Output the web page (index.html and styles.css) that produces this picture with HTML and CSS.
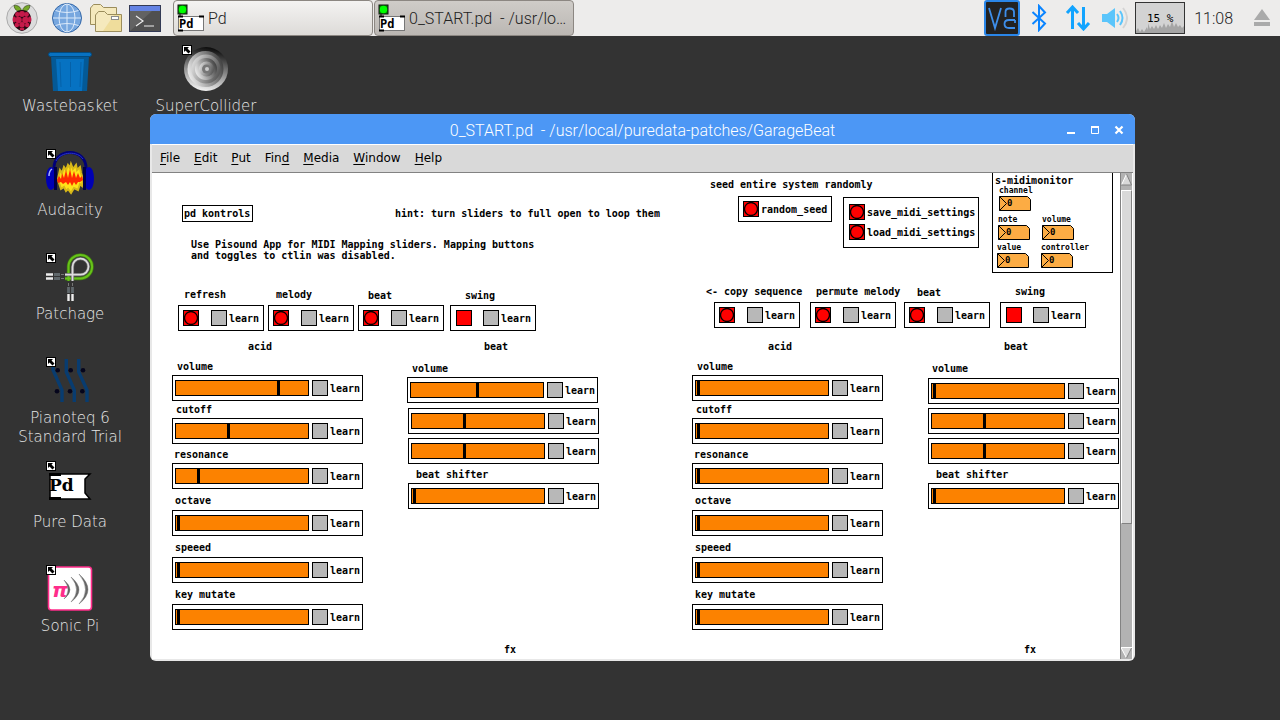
FILE: index.html
```html
<!DOCTYPE html>
<html lang="en">
<head>
  <meta charset="UTF-8">
  <meta name="viewport" content="width=device-width, initial-scale=1.0">
  <title>0_START.pd</title>
  <link rel="stylesheet" href="styles.css">
</head>
<body>
  <header class="taskbar">
    <nav class="launchers">
      <button class="launcher" aria-label="Menu">
        <svg width="32" height="32" viewBox="0 0 32 32">
          <circle cx="16" cy="16" r="15.3" fill="#dcdcdc" stroke="#aaa"/>
          <path d="M15.500 9C11 10 8.500 7.500 8 3.500C12 3 15 5 15.500 9ZM16.500 9C21 10 23.500 7.500 24 3.500C20 3 17 5 16.500 9Z" fill="#75a928" stroke="#2d3d12" stroke-width=".6"/>
          <path d="M16 8C10 8 7 12 7 17C6 23 11 28 16 29C21 28 26 23 25 17C25 12 22 8 16 8Z" fill="#240610"/>
          <g fill="#c51a4a">
            <circle cx="16" cy="12" r="3"/><circle cx="11.500" cy="12.500" r="2.400"/><circle cx="20.500" cy="12.500" r="2.400"/>
            <circle cx="12.500" cy="18" r="3.300"/><circle cx="19.500" cy="18" r="3.300"/>
            <ellipse cx="8.300" cy="17.500" rx="1.700" ry="3"/><ellipse cx="23.700" cy="17.500" rx="1.700" ry="3"/>
            <circle cx="16" cy="22.800" r="2.800"/><circle cx="10.800" cy="23" r="2.300"/><circle cx="21.200" cy="23" r="2.300"/>
            <ellipse cx="16" cy="27" rx="2.500" ry="1.300"/>
          </g>
        </svg>
      </button>
      <button class="launcher" aria-label="Web Browser">
        <svg width="32" height="32" viewBox="0 0 32 32">
          <circle cx="16" cy="16" r="14.500" fill="#77a7df" stroke="#3568a8"/>
          <g fill="none" stroke="#dceafa">
            <path d="M16 2V30M2 16H30M4.500 8.500Q16 12.500 27.500 8.500M4.500 23.500Q16 19.500 27.500 23.500"/>
            <ellipse cx="16" cy="16" rx="8" ry="14"/>
          </g>
        </svg>
      </button>
      <button class="launcher" aria-label="File Manager">
        <svg width="34" height="32" viewBox="0 0 34 32">
          <g stroke="#9b8d5c" fill="#f5e9bd">
            <path d="M1.500 22.500V6L4.500 2.500H11.500L14.500 5.500H27.500V22.500Z"/>
            <path d="M6.500 29.500V13L9.500 9.500H15.500L18.500 12.500H32.500V29.500Z"/>
          </g>
          <path d="M14 29L25 13H32V29Z" fill="#efdd9c"/>
          <rect x="22.500" y="14.500" width="7" height="3" fill="#fff" stroke="#8c8c8c"/>
        </svg>
      </button>
      <button class="launcher" aria-label="Terminal">
        <svg width="34" height="32" viewBox="0 0 34 32">
          <rect x="1.500" y="3.500" width="31" height="26" fill="#505050" stroke="#333a55"/>
          <path d="M2 29V9H24Z" fill="#626262"/>
          <rect x="2" y="4" width="30" height="5" fill="#6483e4"/>
          <path d="M8 14L15 19L8 24M16 24H26" fill="none" stroke="#eee" stroke-width="1.200"/>
        </svg>
      </button>
    </nav>

    <div class="tasks">
      <button class="task">
        <svg width="28" height="30" viewBox="0 0 28 30">
          <rect x="1" y="2" width="9" height="9" fill="#008a00" stroke="#111"/>
          <circle cx="5.500" cy="6.500" r="3.700" fill="#0f0"/>
          <path d="M3 11V14" stroke="#111"/>
          <rect x="1.500" y="13.500" width="25" height="14" fill="#fff" stroke="#777"/>
          <path d="M1 13.500H6M22 13.500H27M1 27.500H6" stroke="#000" stroke-width="2"/>
          <text x="2" y="25" class="pd-text">Pd</text>
        </svg>
        <span>Pd</span>
      </button>
      <button class="task active">
        <svg width="28" height="30" viewBox="0 0 28 30">
          <rect x="1" y="2" width="9" height="9" fill="#008a00" stroke="#111"/>
          <circle cx="5.500" cy="6.500" r="3.700" fill="#0f0"/>
          <path d="M3 11V14" stroke="#111"/>
          <rect x="1.500" y="13.500" width="25" height="14" fill="#fff" stroke="#777"/>
          <path d="M1 13.500H6M22 13.500H27M1 27.500H6" stroke="#000" stroke-width="2"/>
          <text x="2" y="25" class="pd-text">Pd</text>
        </svg>
        <span>0_START.pd  - /usr/lo…</span>
      </button>
    </div>

    <div class="tray">
      <svg width="36" height="36" viewBox="0 0 36 36">
        <rect x="1" y="1" width="34" height="34" rx="2" fill="#222" stroke="#2a86e8" stroke-width="2"/>
        <path d="M5 8L11 28L17 8M21.500 17V12Q21.500 8.500 25.500 8.500Q30 8.500 30 12V17M31 20H25Q20.500 20 20.500 24Q20.500 28 25 28H31M31 20V23" fill="none" stroke="#3d8eea" stroke-width="1.800"/>
      </svg>
      <svg width="16" height="28" viewBox="0 0 16 28">
        <path d="M1.500 8L14 19.500L8 26V2L14 8.500L1.500 20" fill="none" stroke="#0a84ff" stroke-width="2"/>
      </svg>
      <svg width="26" height="26" viewBox="0 0 26 26">
        <path d="M7.500 24V3M2 8L7.500 2L13 8M18.500 2V23M13 18L18.500 24L24 18" fill="none" stroke="#12a4ff" stroke-width="3"/>
      </svg>
      <svg width="26" height="22" viewBox="0 0 26 22">
        <path d="M0 7H5L13 1V21L5 15H0Z" fill="#5bc5fb"/>
        <path d="M15 7Q18 11 15 15M18 4Q23 11 18 18" fill="none" stroke="#5bc5fb" stroke-width="2"/>
        <path d="M21 1Q29 11 21 21" fill="none" stroke="#d4d4d4" stroke-width="2"/>
      </svg>
      <div class="cpu">
        <svg width="48" height="30" viewBox="0 0 48 30">
          <path d="M0 30V28L2 25L4 29L6 26L8 29L11 24L12 27V20L14 26L16 23L18 26L20 22L22 26L24 22L26 25L28 20L30 25L32 21L34 24L36 18L38 24L40 20L42 24L44 22L46 25L48 23V30Z" fill="#a5a5a5"/>
        </svg>
        <span>15 %</span>
      </div>
      <time>11:08</time>
      <svg class="eject" width="16" height="18" viewBox="0 0 16 18">
        <path d="M8 0L16 11H0ZM0 13H16V17H0Z" fill="#aaa"/>
      </svg>
    </div>
  </header>

  <main class="desktop">
    <div class="icons">
      <a class="shortcut" href="#">
        <svg class="art" width="48" height="48" viewBox="0 0 48 48">
          <path d="M5 11H43L41 46H7Z" fill="#045996"/>
          <path d="M10 14H38L36 46H12Z" fill="#0672c2"/>
          <path d="M14 17L15 42M24.500 17V42M35 17L34 42" stroke="#0561a8" stroke-width="1"/>
          <rect x="2.500" y="7.500" width="43" height="4" rx="2" fill="#0872c2" stroke="#034a7e"/>
        </svg>
        <span>Wastebasket</span>
      </a>
      <a class="shortcut" href="#">
        <svg class="art" width="48" height="48" viewBox="0 0 48 48">
          <path d="M8 20C7 -2 41 -2 40 20" fill="none" stroke="#000078" stroke-width="3"/>
          <path d="M10 12C15 2 32 2 37 10" fill="none" stroke="#2a36c8" stroke-width="1"/>
          <path d="M12 30L14 21L16 24L18 18L20 21L22 16L24 19L25 15L27 20L30 16L31 21L34 18L35 24L37 30L36 37L34 35L32 41L28 39L25 44L22 40L20 42L18 38L15 40L13 34Z" fill="#ffe119" stroke="#d8b818" stroke-width="2"/>
          <path d="M11 31L13 27L15 30L16 24L18 29L20 21L22 29L24 20L26 29L28 22L30 29L32 24L34 29L36 27L37 31L34 33L32 33L30 36L28 33L26 37L24 33L22 36L20 33L17 35L15 33L12 34Z" fill="#ff2a00"/>
          <ellipse cx="5" cy="29.500" rx="5" ry="11.500" fill="#0000b4"/>
          <ellipse cx="43" cy="29.500" rx="5" ry="11.500" fill="#0000b4"/>
          <path d="M9.500 18V41M38.500 18V41" stroke="#000046" stroke-width="3"/>
          <path d="M3 27Q3 22 6 20" fill="none" stroke="#aab4ff" stroke-width="1.500"/>
        </svg>
        <svg class="badge" width="10" height="10" viewBox="0 0 10 10"><rect x=".5" y=".5" width="9" height="9" fill="#fff" stroke="#000"/><path d="M2 2H7L5.500 3.500L8.500 6.500L6.500 8.500L3.500 5.500L2 7Z"/></svg>
        <span>Audacity</span>
      </a>
      <a class="shortcut" href="#">
        <svg class="art" width="48" height="48" viewBox="0 0 48 48">
          <g fill="none">
            <path d="M22.500 28V13.500A11.800 11.800 0 1 1 34.300 25.500H19" stroke="#3f7d10" stroke-width="3.400"/>
            <path d="M22.500 28V13.500A11.800 11.800 0 1 1 34.300 25.500H19" stroke="#67c21a" stroke-width="2"/>
            <path d="M26.500 28V14A8 8 0 1 1 34.500 21.700H19" stroke="#666" stroke-width="3.200"/>
            <path d="M26.500 28V14A8 8 0 1 1 34.500 21.700H19" stroke="#ddd" stroke-width="1.800"/>
            <path d="M0 21.500H7M0 25.500H7M22.500 41V48M26.500 41V48" stroke="#eee" stroke-width="2.400"/>
            <path d="M8 21.500H14M8 25.500H14M22.500 34V40M26.500 34V40" stroke="#60686c" stroke-width="2.800"/>
            <path d="M15 21.500H18M15 25.500H18M22.500 30V33M26.500 30V33" stroke="#777" stroke-width="1"/>
          </g>
        </svg>
        <svg class="badge" width="10" height="10" viewBox="0 0 10 10"><rect x=".5" y=".5" width="9" height="9" fill="#fff" stroke="#000"/><path d="M2 2H7L5.500 3.500L8.500 6.500L6.500 8.500L3.500 5.500L2 7Z"/></svg>
        <span>Patchage</span>
      </a>
      <a class="shortcut" href="#">
        <svg class="art" width="48" height="48" viewBox="0 0 48 48">
          <path d="M7 10V13L16 33V45M20.300 2V15L28.300 33V45M32.700 2V15L41 33V45" fill="none" stroke="#083c70" stroke-width="3.400"/>
          <g fill="#05051c">
            <circle cx="11.700" cy="13.300" r="2.300"/><circle cx="24.700" cy="13.300" r="2.300"/><circle cx="37" cy="13.300" r="2.300"/>
            <circle cx="11" cy="34.300" r="2.300"/><circle cx="24" cy="34.300" r="2.300"/><circle cx="36.300" cy="34.300" r="2.300"/>
          </g>
        </svg>
        <svg class="badge" width="10" height="10" viewBox="0 0 10 10"><rect x=".5" y=".5" width="9" height="9" fill="#fff" stroke="#000"/><path d="M2 2H7L5.500 3.500L8.500 6.500L6.500 8.500L3.500 5.500L2 7Z"/></svg>
        <span>Pianoteq 6 Standard Trial</span>
      </a>
      <a class="shortcut" href="#">
        <svg class="art" width="48" height="48" viewBox="0 0 48 48">
          <path d="M4 13H44L39 18V32L44 38H4Z" fill="#fff" stroke="#000" stroke-width="1.500"/>
          <path d="M3 13.500H15M3 37.500H15" stroke="#000" stroke-width="3"/>
          <text x="3" y="30" class="pure-text">Pd</text>
        </svg>
        <svg class="badge" width="10" height="10" viewBox="0 0 10 10"><rect x=".5" y=".5" width="9" height="9" fill="#fff" stroke="#000"/><path d="M2 2H7L5.500 3.500L8.500 6.500L6.500 8.500L3.500 5.500L2 7Z"/></svg>
        <span>Pure Data</span>
      </a>
      <a class="shortcut" href="#">
        <svg class="art" width="48" height="48" viewBox="0 0 48 48">
          <rect x="2.500" y="2" width="43" height="43" rx="3" fill="#fff" stroke="#ff2d8b" stroke-width="1.600"/>
          <text x="6" y="32" class="pi-text">π</text>
          <path d="M18 15Q30 25 18 34Q26 25 18 15ZM25 12Q41 25 25 37Q36 25 25 12ZM33 9Q51 25 33 39Q46 25 33 9Z" fill="#666" stroke="#666" stroke-width=".4"/>
        </svg>
        <svg class="badge" width="10" height="10" viewBox="0 0 10 10"><rect x=".5" y=".5" width="9" height="9" fill="#fff" stroke="#000"/><path d="M2 2H7L5.500 3.500L8.500 6.500L6.500 8.500L3.500 5.500L2 7Z"/></svg>
        <span>Sonic Pi</span>
      </a>
      <a class="shortcut" href="#">
        <svg class="art" width="48" height="48" viewBox="0 0 48 48">
          <defs>
            <linearGradient id="ring" x1=".6" y1="0" x2=".4" y2="1"><stop offset="0" stop-color="#080808"/><stop offset=".45" stop-color="#777"/><stop offset="1" stop-color="#f4f4f4"/></linearGradient>
            <linearGradient id="disc" x1="0" y1=".7" x2="1" y2=".3"><stop offset="0" stop-color="#f0f0f0"/><stop offset="1" stop-color="#3c3c3c"/></linearGradient>
            <linearGradient id="core" x1="0" y1=".3" x2="1" y2=".6"><stop offset="0" stop-color="#ddd"/><stop offset="1" stop-color="#555"/></linearGradient>
          </defs>
          <circle cx="24" cy="24" r="22" fill="url(#ring)"/>
          <circle cx="23.500" cy="24" r="18" fill="url(#disc)"/>
          <circle cx="24" cy="24" r="14.500" fill="url(#core)"/>
          <circle cx="24" cy="24" r="11" fill="url(#disc)"/>
          <circle cx="24.500" cy="24" r="7.500" fill="url(#core)"/>
          <circle cx="24.500" cy="24" r="4.500" fill="#777"/>
          <circle cx="25" cy="24" r="2" fill="#ccc"/>
        </svg>
        <svg class="badge" width="10" height="10" viewBox="0 0 10 10"><rect x=".5" y=".5" width="9" height="9" fill="#fff" stroke="#000"/><path d="M2 2H7L5.500 3.500L8.500 6.500L6.500 8.500L3.500 5.500L2 7Z"/></svg>
        <span>SuperCollider</span>
      </a>
    </div>

    <section class="window">
      <div class="titlebar">
        <h1>0_START.pd  - /usr/local/puredata-patches/GarageBeat</h1>
        <div class="controls">
          <button aria-label="Minimize"><svg width="10" height="10" viewBox="0 0 10 10"><path d="M1 8H9" stroke="#fff" stroke-width="2"/></svg></button>
          <button aria-label="Maximize"><svg width="10" height="10" viewBox="0 0 10 10"><path d="M1.500 1V8.500H8.500V1" fill="none" stroke="#fff"/><path d="M1 2H9" stroke="#fff" stroke-width="2"/></svg></button>
          <button aria-label="Close"><svg width="10" height="10" viewBox="0 0 10 10"><path d="M1.500 1.500L8.500 8.500M8.500 1.500L1.500 8.500" stroke="#fff" stroke-width="2.200"/></svg></button>
        </div>
      </div>
      <nav class="menubar">
        <button><u>F</u>ile</button>
        <button><u>E</u>dit</button>
        <button><u>P</u>ut</button>
        <button>Fin<u>d</u></button>
        <button><u>M</u>edia</button>
        <button><u>W</u>indow</button>
        <button><u>H</u>elp</button>
      </nav>
      <div class="content">
        <div class="patch" id="patch"></div>
        <div class="scrollbar">
          <svg width="11" height="17" viewBox="0 0 11 17"><path d="M5.500 1L10.500 12H.5Z" fill="#d9d9d9"/><path d="M.5 12L5.500 1" stroke="#fff"/><path d="M5.500 1L10.500 12H0" fill="none" stroke="#828282"/></svg>
          <div class="trough"><div class="thumb"></div></div>
          <svg width="11" height="12" viewBox="0 0 11 12"><path d="M0 1H11L5.500 11Z" fill="#d9d9d9"/><path d="M11 .5H0L5.500 11" fill="none" stroke="#fff"/><path d="M5.500 11L10.500 1" stroke="#828282"/></svg>
        </div>
      </div>
    </section>
  </main>

  <script src="patch.js"></script>
</body>
</html>
```

FILE: styles.css
```css
* {
  box-sizing: border-box;
}

body {
  margin: 0;
  min-height: 100vh;
  display: flex;
  flex-direction: column;
  background: #333333;
  font-family: Roboto, "Liberation Sans", sans-serif;
  overflow: hidden;
}

button {
  padding: 0;
  border: none;
  background: none;
  font: inherit;
  color: inherit;
}

svg {
  display: block;
  flex: none;
}

/* Taskbar */
.taskbar {
  display: flex;
  align-items: center;
  height: 36px;
  background: #edeceb;
  color: #222;
  font-size: 16px;
  font-weight: 300;
}

.launchers {
  display: flex;
  align-items: center;
  gap: 5px;
  padding-left: 6px;
  width: 173px;
}

.launcher:nth-child(2) {
  margin-left: 8px;
}

.launcher:nth-child(3) {
  margin-left: 1px;
}

.tasks {
  display: flex;
  gap: 1px;
  flex: 1;
}

.task {
  display: flex;
  align-items: center;
  gap: 3px;
  width: 200px;
  height: 36px;
  padding: 0 3px;
  border: 1px solid #8c8782;
  border-radius: 4px;
  background: linear-gradient(#f4f3f2, #dddbd8);
  white-space: pre;
}

.task.active {
  background: linear-gradient(#cfccc8, #bbb7b3);
}

.pd-text {
  font: bold 12px "DejaVu Sans Mono", monospace;
}

.tray {
  display: flex;
  align-items: center;
  padding-right: 10px;
}

.tray > * + * {
  margin-left: 11px;
}

.tray svg:nth-child(3) {
  margin-left: 18px;
}

.cpu {
  display: grid;
  place-items: center;
  width: 50px;
  height: 32px;
  border: 1px solid #333;
  background: #d3d3d3;
  color: #000;
  font: 11px "DejaVu Sans Mono", monospace;
}

.cpu > * {
  grid-area: 1 / 1;
}

.tray .cpu {
  margin-left: 7px;
}

.tray time {
  margin-left: 9px;
}

.tray .eject {
  margin-left: 21px;
}

/* Desktop */
.desktop {
  position: relative;
  flex: 1;
}

.icons {
  display: grid;
  grid-template-rows: repeat(6, 104px);
  grid-auto-columns: 136px;
  grid-auto-flow: column;
  padding: 9px 0 0 2px;
}

.shortcut {
  position: relative;
  display: flex;
  flex-direction: column;
  align-items: center;
  gap: 4px;
  padding: 0 12px;
  color: #e6e6e6;
  font: 200 15px/19px "DejaVu Sans Light", "DejaVu Sans", sans-serif;
  text-align: center;
  text-decoration: none;
}

.badge {
  position: absolute;
  top: 0;
  left: 44px;
}

.pure-text {
  font: bold 17px "DejaVu Serif", serif;
}

.pi-text {
  font: italic bold 20px "DejaVu Sans", sans-serif;
  fill: #ff2d8b;
}

/* Window */
.window {
  position: absolute;
  top: 78px;
  right: 145px;
  bottom: 59px;
  left: 150px;
  display: flex;
  flex-direction: column;
  padding: 0 2px 2px;
  border-radius: 6px;
  background: #e8e8e8;
  overflow: hidden;
}

.titlebar {
  display: grid;
  align-items: center;
  height: 30px;
  margin: 0 -2px;
  padding-top: 2px;
  background: #4c97f5;
  color: #fff;
}

.titlebar > * {
  grid-area: 1 / 1;
}

.titlebar h1 {
  margin: 0;
  font-size: 16px;
  font-weight: 300;
  text-align: center;
  white-space: pre;
}

.controls {
  display: flex;
  gap: 14px;
  justify-self: end;
  padding-right: 11px;
}

.menubar {
  display: flex;
  align-items: center;
  gap: 14px;
  height: 29px;
  padding: 0 8px 2px;
  border-top: 1px solid #fff;
  border-bottom: 1px solid #828282;
  background: #d9d9d9;
  color: #000;
  font: 12px "DejaVu Sans", sans-serif;
}

.menubar u {
  text-underline-offset: 2px;
}

.content {
  display: flex;
  flex: 1;
  min-height: 0;
  background: #fff;
}

.scrollbar {
  display: flex;
  flex-direction: column;
  width: 13px;
  border-left: 1px solid #828282;
  border-right: 1px solid #fff;
  background: #b2b2b2;
}

.trough {
  flex: 1;
}

.thumb {
  height: 73%;
  border: 1px solid #fff;
  border-right-color: #828282;
  border-bottom-color: #828282;
  background: #d9d9d9;
}

/* Patch canvas */
.patch {
  position: relative;
  flex: 1;
  overflow: hidden;
  color: #000;
  font: bold 10px/11px "DejaVu Sans Mono", monospace;
}

.node {
  position: absolute;
  white-space: pre;
}

.object,
.module {
  border: 1px solid #000;
  background: #fff;
}

.object {
  padding: 2px 2px 2px 1px;
}

.module {
  display: flex;
  align-items: center;
}

.pad {
  width: 86px;
  height: 26px;
  padding: 0 4px;
  gap: 12px;
}

.pad.swing {
  padding: 0 5px;
  gap: 11px;
}

.fader {
  width: 191px;
  height: 26px;
  padding: 0 2px;
  gap: 3px;
}

.buttons {
  flex-direction: column;
  align-items: flex-start;
  justify-content: center;
  gap: 4px;
  padding: 4px;
}

.buttons.double {
  padding: 6px 3px 7px 5px;
}

.monitor {
  display: block;
  width: 121px;
  height: 101px;
  padding: 2px;
}

.learn,
.bang-label {
  display: flex;
  align-items: center;
  gap: 2px;
}

.bang,
.toggle {
  width: 16px;
  height: 16px;
  margin: 0;
  border: 1px solid #000;
  flex: none;
}

.bang {
  background: #ff0000;
}

.bang svg {
  width: 14px;
  height: 14px;
}

.toggle {
  appearance: none;
  background: #b8b8b8;
}

.toggle:checked {
  background: #ff0000;
}

.slider {
  appearance: none;
  width: 134px;
  height: 16px;
  margin: 0;
  padding: 0 1px;
  border: 1px solid #000;
  background: #fc8200;
}

.slider::-webkit-slider-thumb {
  appearance: none;
  width: 3px;
  height: 14px;
  background: #000;
}

.slider::-moz-range-thumb {
  width: 3px;
  height: 14px;
  border: none;
  border-radius: 0;
  background: #000;
}

.number {
  display: flex;
  flex-direction: column;
  font-size: 8px;
}

.number-box {
  display: grid;
  width: 32px;
  height: 15px;
}

.number-box > * {
  grid-area: 1 / 1;
}

.number-box input {
  width: 22px;
  margin-left: 8px;
  padding: 0;
  border: none;
  background: none;
  font: inherit;
  font-size: 9px;
  z-index: 1;
}
```

FILE: patch.js
```js
const patch = document.getElementById('patch');

// [x, y, text]
const comments = [
  [558, 6, 'seed entire system randomly'],
  [243, 35, 'hint: turn sliders to full open to loop them'],
  [39, 66, 'Use Pisound App for MIDI Mapping sliders. Mapping buttons\nand toggles to ctlin was disabled.'],
  [32, 116, 'refresh'],
  [124, 116, 'melody'],
  [216, 117, 'beat'],
  [313, 117, 'swing'],
  [554, 113, '<- copy sequence'],
  [664, 113, 'permute melody'],
  [765, 114, 'beat'],
  [863, 113, 'swing'],
  [96, 168, 'acid'],
  [332, 168, 'beat'],
  [616, 168, 'acid'],
  [852, 168, 'beat'],
  [352, 471, 'fx'],
  [872, 471, 'fx'],
];

// [x, y, swing]
const pads = [
  [26, 132], [116, 132], [206, 132], [298, 132, true],
  [562, 129], [658, 129], [752, 129], [848, 129, true],
];

// [x, y, value, name, name x, name y]
const faders = [
  [20, 202, 100, 'volume', 25, 188],
  [20, 245, 50, 'cutoff', 24, 231],
  [20, 290, 20, 'resonance', 22, 276],
  [20, 337, 0, 'octave', 23, 322],
  [20, 384, 0, 'speeed', 23, 369],
  [20, 431, 0, 'key mutate', 23, 416],
  [255, 204, 64, 'volume', 260, 190],
  [256, 235, 50],
  [256, 265, 50],
  [256, 310, 0, 'beat shifter', 264, 296],
  [540, 202, 0, 'volume', 545, 188],
  [540, 245, 0, 'cutoff', 544, 231],
  [540, 290, 0, 'resonance', 542, 276],
  [540, 337, 0, 'octave', 543, 322],
  [540, 384, 0, 'speeed', 543, 369],
  [540, 431, 0, 'key mutate', 543, 416],
  [776, 205, 0, 'volume', 780, 190],
  [776, 235, 50],
  [776, 265, 50],
  [776, 310, 0, 'beat shifter', 784, 296],
];

const numbers = [
  [847, 12, 'channel'],
  [846, 41, 'note'],
  [890, 41, 'volume'],
  [845, 69, 'value'],
  [889, 69, 'controller'],
];

const learn = '<label class="learn"><input type="checkbox" class="toggle">learn</label>';
const circle = '<svg viewBox="0 0 14 14"><circle cx="7" cy="7" r="6.500" fill="none" stroke="#000" stroke-width="1.300"/></svg>';

function bang(name) {
  return `<button class="bang" aria-label="${name}">${circle}</button>`;
}

function add(x, y, className, html, tag = 'div') {
  const node = document.createElement(tag);
  node.className = 'node ' + className;
  node.style.left = x + 'px';
  node.style.top = y + 'px';
  node.innerHTML = html;
  patch.appendChild(node);
  return node;
}

comments.forEach(([x, y, text]) => {
  add(x, y, 'comment', '').textContent = text;
});

add(30, 32, 'object', 'pd kontrols');

add(586, 23, 'module buttons', `<div class="bang-label">${bang('random_seed')}random_seed</div>`);
add(691, 24, 'module buttons double',
  `<div class="bang-label">${bang('save_midi_settings')}save_midi_settings</div>` +
  `<div class="bang-label">${bang('load_midi_settings')}load_midi_settings</div>`);

pads.forEach(([x, y, swing]) => {
  if (swing) {
    add(x, y, 'module pad swing', '<input type="checkbox" class="toggle" aria-label="swing" checked>' + learn);
  } else {
    add(x, y, 'module pad', bang('bang') + learn);
  }
});

faders.forEach(([x, y, value, name, nameX, nameY], i) => {
  if (name) {
    add(nameX, nameY, 'comment', name, 'label').htmlFor = 'fader' + i;
  }
  add(x, y, 'module fader',
    `<input type="range" class="slider" id="fader${i}" min="0" max="127" value="${value}" aria-label="${name || 'beat'}">` + learn);
});

// top edge of the monitor is scrolled out of view
add(840, -1, 'module monitor', 's-midimonitor');

numbers.forEach(([x, y, name]) => {
  add(x, y, 'number',
    `${name}<span class="number-box">
      <svg width="32" height="15" viewBox="0 0 32 15"><path d="M.5 .5H28.500L31.500 3.500V14.500H.5ZM.5 .5L7.500 7.500L.5 14.500" fill="#fcac44" stroke="#000"/></svg>
      <input type="text" value="0">
    </span>`, 'label');
});
```
